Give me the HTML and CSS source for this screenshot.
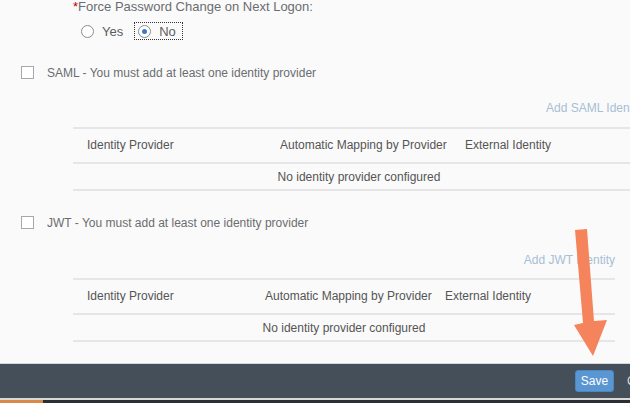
FILE: index.html
```html
<!DOCTYPE html>
<html>
<head>
<meta charset="utf-8">
<link rel="stylesheet" href="styles.css">
</head>
<body>
<div class="screen">
  <main class="content">
    <div class="logon">
      <div class="field-label"><span class="req">*</span>Force Password Change on Next Logon:</div>
      <div class="radios">
        <label class="radio"><span class="radio-dot"></span><span>Yes</span></label>
        <label class="radio focused"><span class="radio-dot checked"></span><span>No</span></label>
      </div>
    </div>

    <section class="idp saml">
      <div class="check-row"><span class="checkbox"></span><span>SAML - You must add at least one identity provider</span></div>
      <div class="add-link">Add SAML Identity</div>
      <div class="table">
        <div class="trow thead">
          <div class="cell">Identity Provider</div>
          <div class="cell">Automatic Mapping by Provider</div>
          <div class="cell">External Identity</div>
        </div>
        <div class="trow empty">No identity provider configured</div>
      </div>
    </section>

    <section class="idp jwt">
      <div class="check-row"><span class="checkbox"></span><span>JWT - You must add at least one identity provider</span></div>
      <div class="add-link">Add JWT Identity</div>
      <div class="table">
        <div class="trow thead">
          <div class="cell">Identity Provider</div>
          <div class="cell">Automatic Mapping by Provider</div>
          <div class="cell">External Identity</div>
        </div>
        <div class="trow empty">No identity provider configured</div>
      </div>
    </section>
  </main>

  <footer class="footer">
    <button class="btn-save">Save</button>
    <span class="btn-cancel">Cancel</span>
  </footer>
  <div class="taskbar"><span class="task-active"></span></div>

  <svg class="arrow" width="630" height="403" viewBox="0 0 630 403">
    <polygon points="575,230 587,229 594,321 607,320 593,356 574,325 583,323" fill="#f5845c"/>
  </svg>
</div>
</body>
</html>
```

FILE: styles.css
```css
* { box-sizing: border-box; }
html, body { margin: 0; padding: 0; }
body {
  width: 630px;
  height: 403px;
  overflow: hidden;
  background: #fafafa;
  font-family: "Liberation Sans", Arial, sans-serif;
  font-size: 12px;
  color: #6a6d70;
}
.screen {
  position: relative;
  width: 630px;
  height: 403px;
  overflow: hidden;
  display: flex;
  flex-direction: column;
}
.content {
  height: 363px;
  overflow: hidden;
  display: flex;
  flex-direction: column;
}
.logon {
  padding-left: 73px;
}
.field-label {
  font-size: 13px;
  line-height: 14px;
  height: 14px;
  color: #6a6d70;
}
.req { color: #bb0000; }
.radios {
  display: flex;
  align-items: center;
  margin-top: 8px;
  padding-left: 8px;
  gap: 11px;
}
.radio {
  display: flex;
  align-items: center;
  gap: 8px;
  font-size: 13px;
  height: 18px;
  color: #5a5d60;
}
.radio.focused {
  border: 1px dotted #333;
  padding: 0 6px 0 3px;
}
.radio-dot {
  width: 13px;
  height: 13px;
  border: 1px solid #8c8c8c;
  border-radius: 50%;
  background: #fff;
  position: relative;
}
.radio-dot.checked::after {
  content: "";
  position: absolute;
  left: 3px;
  top: 3px;
  width: 5px;
  height: 5px;
  border-radius: 50%;
  background: #3b7bc1;
}
.idp { padding-left: 21px; }
.saml { margin-top: 26px; }
.jwt { margin-top: 25px; }
.check-row {
  display: flex;
  align-items: center;
  gap: 13px;
  font-size: 12px;
  height: 13px;
  color: #6a6d70;
}
.checkbox {
  width: 13px;
  height: 13px;
  border: 1px solid #a8a8a8;
  background: #fff;
  flex: none;
}
.add-link {
  color: #a7bed6;
  font-size: 12px;
  line-height: 14px;
  white-space: nowrap;
  text-align: right;
  margin-top: 22px;
}
.jwt .add-link { margin-top: 24px; }
.saml .add-link { width: 624px; }
.jwt .add-link { width: 594px; }
.table {
  margin-left: 52px;
  margin-top: 12px;
  border-top: 2px solid #e6e6e6;
}
.jwt .table { margin-top: 11px; }
.saml .table { width: 572px; }
.jwt .table { width: 542px; }
.trow {
  border-bottom: 2px solid #e6e6e6;
}
.thead {
  display: grid;
  height: 35px;
  align-items: center;
  color: #555;
  padding-bottom: 2px;
}
.saml .thead { grid-template-columns: 193px 185px 1fr; }
.jwt .thead { grid-template-columns: 178px 180px 1fr; }
.cell {
  padding-left: 14px;
  white-space: nowrap;
  font-size: 12px;
}
.empty {
  height: 27px;
  display: flex;
  align-items: center;
  justify-content: center;
  color: #555;
  font-size: 12px;
}
.footer {
  height: 35px;
  background: #454f59;
  border-top: 1px solid #d5d8db;
  display: flex;
  align-items: center;
  justify-content: flex-end;
  gap: 13px;
  margin-right: -37px;
}
.btn-save {
  font-family: "Liberation Sans", Arial, sans-serif;
  font-size: 12px;
  color: #fff;
  background: #5a96d1;
  border: 1px solid #4c86c0;
  border-radius: 3px;
  height: 22px;
  width: 39px;
  padding: 0;
}
.btn-cancel {
  color: #d8dde2;
  font-size: 12px;
  width: 40px;
}
.taskbar {
  height: 5px;
  border-top: 2px solid #d8d8d8;
  background: #2b2f33;
  display: flex;
}
.task-active {
  width: 43px;
  background: #d98a4a;
}
.arrow {
  position: absolute;
  left: 0;
  top: 0;
  pointer-events: none;
}
```
